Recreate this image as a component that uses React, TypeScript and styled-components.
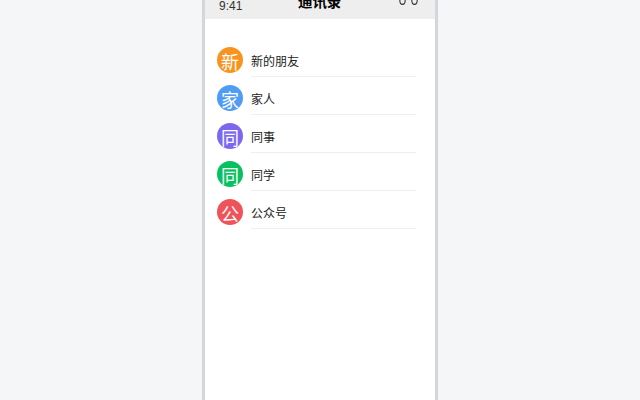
import styled, { createGlobalStyle } from "styled-components";

const GlobalStyle = createGlobalStyle`
  html, body {
    margin: 0;
    height: 100%;
    overflow: hidden;
    background: #f5f6f8;
    font-family: "Liberation Sans", "Noto Sans CJK SC", sans-serif;
  }
`;

const contacts = [
  { name: "新的朋友", glyph: "新", color: "#f7931e" },
  { name: "家人", glyph: "家", color: "#4f9cf5" },
  { name: "同事", glyph: "同", color: "#7b68ee" },
  { name: "同学", glyph: "同", color: "#07c160" },
  { name: "公众号", glyph: "公", color: "#f0525a" },
];

const App = () => (
  <Page>
    <GlobalStyle />
    <Phone>
      <Header>
        <Time>9:41</Time>
        <Title>通讯录</Title>
        <StatusIcons>
          <svg width="7" height="12" viewBox="0 0 7 12">
            <ellipse cx="3.5" cy="6" rx="2.7" ry="4.4" fill="none" stroke="#333" strokeWidth="1.1" />
          </svg>
          <svg width="7" height="12" viewBox="0 0 7 12">
            <ellipse cx="3.5" cy="6" rx="2.7" ry="4.4" fill="none" stroke="#333" strokeWidth="1.1" />
          </svg>
        </StatusIcons>
      </Header>
      <List>
        {contacts.map((c) => (
          <Row key={c.name}>
            <Avatar $color={c.color}>{c.glyph}</Avatar>
            <Name>{c.name}</Name>
          </Row>
        ))}
      </List>
    </Phone>
  </Page>
);

export default App;

const Page = styled.div`
  display: flex;
  justify-content: center;
  height: 400px;
  overflow: hidden;
`;

const Phone = styled.div`
  box-sizing: border-box;
  width: 236px;
  height: 500px;
  margin-top: -24px;
  background: #fff;
  border-left: 3px solid #d3d6da;
  border-right: 3px solid #d3d6da;
`;

const Header = styled.div`
  box-sizing: border-box;
  height: 43px;
  padding: 0 17px 0 14px;
  display: flex;
  align-items: flex-start;
  justify-content: space-between;
  background: #eeeeee;
`;

const Time = styled.span`
  margin-top: 23px;
  font-size: 12px;
  line-height: 14px;
  color: #333;
`;

const Title = styled.span`
  margin-top: 16px;
  margin-right: 2px;
  font-size: 14.4px;
  line-height: 20px;
  font-weight: 700;
  color: #000;
`;

const StatusIcons = styled.div`
  display: flex;
  gap: 5px;
  margin-top: 18px;
`;

const List = styled.div`
  padding: 20px 19px 0 12px;
`;

const Row = styled.div`
  display: flex;
  align-items: center;
  gap: 8px;
  height: 38px;
`;

const Avatar = styled.div<{ $color: string }>`
  flex: none;
  width: 26px;
  height: 26px;
  margin-top: 4px;
  border-radius: 50%;
  background: ${(p) => p.$color};
  color: #fff;
  font-size: 18px;
  line-height: 29px;
  text-align: center;
  overflow: hidden;
  font-family: "Noto Sans CJK SC", sans-serif;
`;

const Name = styled.div`
  box-sizing: border-box;
  flex: 1;
  height: 38px;
  padding-top: 13px;
  font-size: 12px;
  line-height: 18px;
  color: #222;
  border-bottom: 1px solid #eeeeee;
  font-family: "Noto Sans CJK SC", sans-serif;
`;
